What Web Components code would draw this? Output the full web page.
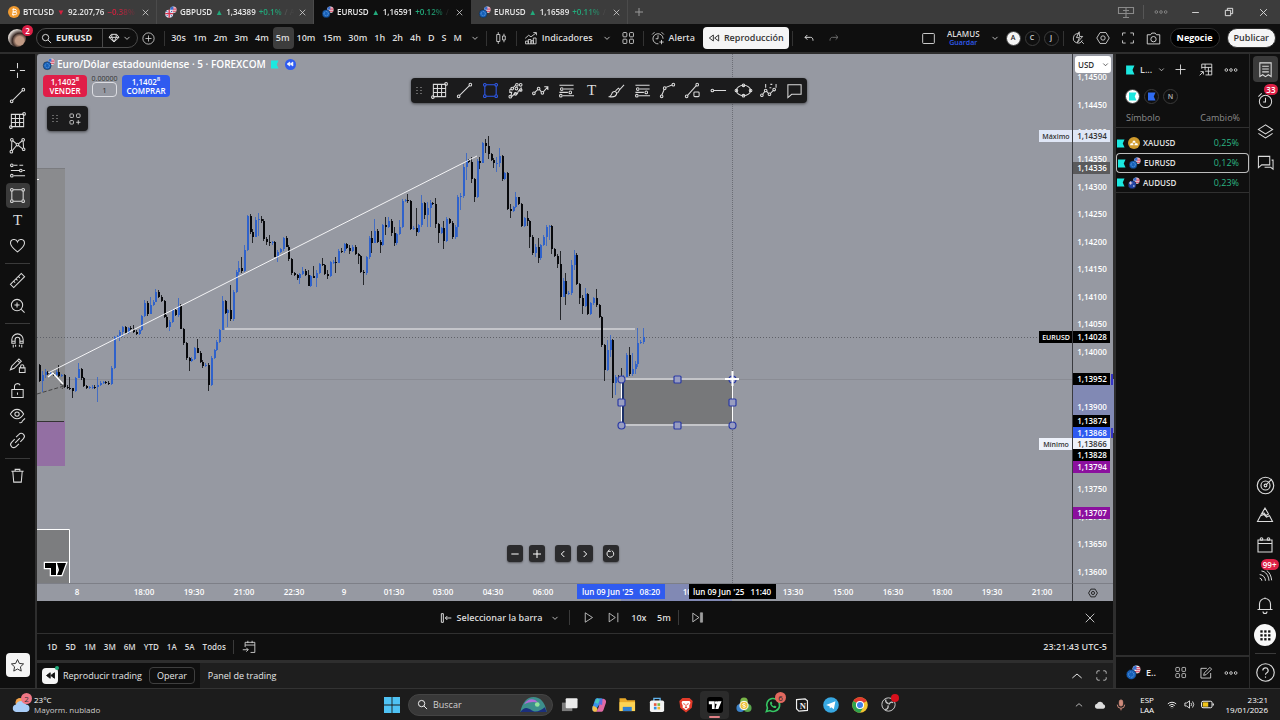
<!DOCTYPE html>
<html lang="es">
<head>
<meta charset="utf-8">
<title>EURUSD 1,16591</title>
<style>
  html, body { height: 100%; }
  body {
    margin: 0;
    overflow: hidden;
    background: #2e2e2e;
    color: #dbdbdb;
    font: 600 9px/12px "Open Sans", "Noto Sans", sans-serif;
  }
</style>
</head>
<body>
<trading-app></trading-app>

<script>
/**
 * Icon shapes, drawn on an 18 x 18 grid
 */
const dot = (x, y, r = 1.4) => `<circle cx="${x}" cy="${y}" r="${r}"/>`;
const US_FLAG = `<circle cx="12.5" cy="5.5" r="4.8" fill="#f3f3f6" stroke="none"/>
  <path d="M12 3.2h5M12 5.6h5.2M9 8h7.6" stroke="#d8304e" stroke-width="1.3"/>
  <path d="M7.8 5.7a4.8 4.8 0 0 1 4.8-5v5z" fill="#3b6fd0" stroke="none"/>`;

const ICONS = {
  cross: '<path d="M9 1v5.5M9 11.500v5.500M1 9h5.500M11.500 9H17"/>',
  trend: dot(2.8, 15.2) + dot(15.2, 2.8) + '<path d="M3.800 14.200 14.200 3.800"/>',
  gann: '<path d="M2.500 2.500h13v13h-13zM2.500 6.800h13M2.500 11.200h13M6.800 2.500v13M11.200 2.500v13"/>' + dot(2, 16) + dot(16, 2),
  pattern: dot(3, 3) + dot(2.500, 15.500) + dot(9, 8) + dot(15, 3) + dot(15.500, 13) + '<path d="M2.700 14 3 4.500M4 4l4 3.200M10 7.200 14 4M15 4.500l.4 7M3.500 14.500 8 9M10 9l4.500 3.500"/>',
  fib: '<path d="M5 3.500h4M11 3.500h4M2 9h9M14.500 9H17M5 14.500h12"/>' + dot(3, 3.5) + dot(12.5, 9) + dot(3, 14.5),
  fibs: '<path d="M1.500 3.500h15M6 7.500h10.500M1.500 11h9M5 14.500h12"/>' + dot(4, 7.5) + dot(13, 11) + dot(3, 14.5),
  box: '<path d="M3 4.500v9M15 4.500v9M4.500 3h9M4.500 15h9"/>' + dot(3, 3) + dot(15, 3) + dot(3, 15) + dot(15, 15),
  text: '<text x="9" y="14" text-anchor="middle" font-family="Liberation Serif, serif" font-size="16" font-weight="400" fill="currentColor" stroke="none">T</text>',
  heart: '<path d="M9 15.800C5 12.500 1.600 9.800 1.600 6.500a3.800 3.800 0 0 1 7.400-1.300 3.800 3.800 0 0 1 7.400 1.300c0 3.300-3.400 6-7.400 9.300z"/>',
  ruler: '<path d="M1.500 13 13 1.500 16.500 5 5 16.500zM5 9.800l1.500 1.500M7.500 7.300 9 8.800M10 4.800l1.500 1.500"/>',
  zoomin: '<circle cx="8.500" cy="8.500" r="6"/><path d="M13 13l3.500 3.500M8.500 5.800v5.400M5.800 8.500h5.400"/>',
  magnet: '<path d="M3 12V8a6 6 0 0 1 12 0v4h-3.500V8a2.500 2.500 0 0 0-5 0v4zM3 9.800h3.500M11.500 9.800H15M4.500 13.500v3M7 13.500v2M11 13.500v2M13.500 13.500v3"/>',
  pencillock: '<path d="M1.500 13.500 3 9.500 10.500 2 13 4.500 5.500 12zM9 3.500 11.500 6M11 11.500h6v5h-6zM12.300 11.500v-1.600a1.700 1.700 0 0 1 3.400 0v1.600"/>',
  lock: '<path d="M3 8h12v8.500H3zM5.800 8V5a3.200 3.200 0 0 1 6-1.600M9 11v2.500"/>',
  eye: '<path d="M1.500 7.500C3.500 4 6 2.500 8.500 2.500s5 1.500 7 5c-2 3.500-4.500 5-7 5s-5-1.500-7-5z"/><circle cx="8.500" cy="7.500" r="2.300"/><path d="M11 16.500c2.500.6 3-.6 3-1.600M14 15l3-3"/>',
  link: '<path d="M7.500 5.500 10.500 2.500a3.200 3.200 0 0 1 4.800 4.500l-3.300 3.500M10.500 12.500 7.500 15.500A3.200 3.200 0 0 1 2.700 11L6 7.500M6.500 11.500l5-5"/>',
  trash: '<path d="M2.500 4.500h13M6.500 4.500V2.500h5v2M4 4.500 5 16h8l1-11.500"/>',
  star: '<path d="M9 1.800l2.200 4.700 5.100.6-3.800 3.500 1 5.100L9 13.200l-4.500 2.500 1-5.100L1.700 7.100l5.100-.6z"/>',
  search: '<circle cx="7.500" cy="7.500" r="5.200"/><path d="M11.500 11.500l5 5"/>',
  gem: '<path d="M5 3.500h8l3.500 4.500L9 15 1.500 8zM1.500 8h15M6 3.500 5.500 8 9 15l3.500-7-.5-4.500"/>',
  plus: '<path d="M9 3v12M3 9h12"/>',
  pluscircle: '<circle cx="9" cy="9" r="7.800"/><path d="M9 4.800v8.400M4.800 9h8.400"/>',
  down: '<path d="M4.500 7 9 11.500 13.500 7"/>',
  up: '<path d="M2 12 9 6l7 6"/>',
  left: '<path d="M11 4.500 6.500 9l4.500 4.500"/>',
  right: '<path d="M7 4.500 11.500 9 7 13.500"/>',
  minus: '<path d="M3.500 9h11"/>',
  reset: '<path d="M5 5.500a5.500 5.500 0 1 0 6-1M5 5.500h4.500M7.500 2.500 5 5.500"/>',
  candles: '<path d="M3.500 4.500h4v9h-4zM5.500 1.500v3M5.500 13.500v3M11 6.500h3.500v5H11zM12.800 3.500v3M12.800 11.500v3"/>',
  indicators: '<path d="M1.500 9.500 6 5.500l3 2 6.500-5M12 2h4v3.500M2 13h3.500v3.500H2zM5.500 11H9v5.500H5.500zM9 12.500h3v4H9zM12 9h3.500v7.500H12z"/>',
  grid4: '<rect x="2.500" y="2" width="5" height="5.500" rx="1"/><rect x="11" y="2" width="5" height="5.500" rx="1"/><rect x="2.500" y="10.500" width="5" height="5.500" rx="1"/><rect x="11" y="10.500" width="5" height="5.500" rx="1"/>',
  addgrid: '<rect x="2.500" y="2.500" width="4.500" height="4.500" rx="1"/><rect x="11" y="2.500" width="4.500" height="4.500" rx="1"/><rect x="2.500" y="11" width="4.500" height="4.500" rx="1"/><path d="M13.200 10.500v5.500M10.500 13.200H16"/>',
  alarm: '<path d="M15.500 10a6.500 6.500 0 1 0-6 6.500M9 5.500v4.500H6M1.500 4.500 4.500 1.500M13.500 1.500l3 3M13.500 11.500v5.500M10.800 14.200h5.500"/>',
  rewind: '<path d="M8 4.500 2 9l6 4.500zM16 4.500 10 9l6 4.500z"/>',
  rewindfill: '<path d="M8.500 4.500 2.500 9l6 4.500zM15.500 4.500 9.500 9l6 4.500z" fill="currentColor"/>',
  undo: '<path d="M6.500 4.500 3 8l3.500 3.500M3 8h8.500c2.500 0 3.500 2 3.500 5"/>',
  redo: '<path d="M11.500 4.500 15 8l-3.500 3.500M15 8H6.500C4 8 3 10 3 13"/>',
  layout: '<rect x="2" y="3" width="14" height="12" rx="1"/>',
  flash: '<path d="M10 3.500a6 6 0 1 0 4.500 8.500M13 13l3.500 3.500M10.500 1 7 8.500h4L8 15l7-8h-4z"/>',
  hexgear: '<path d="M5.200 2h7.600L17 9l-4.200 7H5.200L1 9z"/><circle cx="9" cy="9" r="2.800"/>',
  fullscreen: '<path d="M2 6V2.500h4M12 2.500h4V6M16 12v3.500h-4M6 15.500H2V12"/>',
  maximize: '<path d="M2.500 6.500v-2a2 2 0 0 1 2-2h2M11.500 2.500h2a2 2 0 0 1 2 2v2M15.500 11.500v2a2 2 0 0 1-2 2h-2M6.500 15.500h-2a2 2 0 0 1-2-2v-2"/>',
  camera: '<path d="M1.500 4.500h4l1.500-2h4l1.500 2h4v11h-15z"/><circle cx="9" cy="9.800" r="3.200"/>',
  dots: dot(3, 9, 1.7) + dot(9, 9, 1.7) + dot(15, 9, 1.7),
  panels: '<path d="M1.500 4.500h15v6h-15zM9 4.500v10M6 14.500h6M6 7.500h6"/>',
  restore: '<path d="M3.500 6.500h8v8h-8zM6.500 6.500v-3h8v8h-3"/>',
  close: '<path d="M3.500 3.500l11 11M14.500 3.500l-11 11"/>',
  tablecols: '<path d="M4.500 8V2.500h12v13H9M4.500 6.500h12M8.500 11h8M8.500 2.500v7M12.500 6.500v9M2 16l4-4M3 11.500h3.500V15"/>',
  watchlist: '<path d="M3 2h12v14.500l-3-2-3 2-3-2-3 2zM5.500 5.500h7M5.500 8.500h7M5.500 11.500h7"/>',
  alerts: '<circle cx="9" cy="10" r="6.500"/><path d="M9 6v4.500H6.500M1.500 5 5 1.500"/>',
  layers: '<path d="M9 2 1.500 6.800 9 11.500l7.500-4.700zM1.500 11 9 15.800l7.500-4.800"/>',
  chat: '<path d="M1.500 2.500h12v9H5l-3.500 3zM15.500 6.500h1.500V16l-2.500-2H8"/>',
  target: '<circle cx="9" cy="9" r="7.800"/><circle cx="9" cy="9" r="4.300"/><circle cx="9" cy="9" r="1.300"/><path d="M10 8l5-5"/>',
  pyramid: '<path d="M9 2 5.500 8l2.500-1 2 2.500 2.500-1.500zM4.500 9.800 1.500 15.500h15l-3-5.700-3 1.200-2.500-2.500z"/>',
  calendar: '<path d="M2 4h14v12H2zM2 7.500h14"/><circle cx="5.500" cy="3" r="1.300"/><circle cx="12.500" cy="3" r="1.300"/>',
  stream: '<path d="M3 12.500a3 3 0 0 1 2.500 3M3 8.500a7 7 0 0 1 6.500 7M5 4.500c5 .5 8 5 8.500 11M11 4c3 2 5 6 5.500 11"/>',
  bell: '<path d="M3.500 13.500V8a5.500 5.500 0 0 1 11 0v5.500zM1.500 13.500h15M7 15.500a2 2 0 0 0 4 0M9 2.500V1.500"/>',
  apps: [4, 9, 14].map(y => [4, 9, 14].map(x => `<rect x="${x - 1}" y="${y - 1}" width="3" height="3" fill="currentColor" stroke="none"/>`).join('')).join(''),
  help: '<circle cx="9" cy="9" r="8.300"/><path d="M6.500 7.200a2.500 2.500 0 1 1 3.500 2.200c-.8.400-1 .9-1 1.800M9 12.800v1.200"/>',
  brush: '<path d="M1.500 15.500c3 .5 6.500.5 7.500-2.500.8-2.500-2.200-4-4-2.200-1.500 1.500-.5 3.200-3.500 4.700zM8 9.500 11 6.500l1.500 1.500 4.500-5M10 12l2.500-4"/>',
  highlighter: '<path d="M6.500 6 9 3.500M5 7.500 3 8v3h2l-1 4.500M5 15.500l3-3h3l1-3 3-1v-3"/>' + dot(10.5, 3) + dot(14.5, 3) + dot(14.5, 8.5) + dot(3.5, 15.5) + dot(9, 12.5) + dot(5.5, 7) + dot(10, 7),
  polyline: dot(2, 12) + dot(7, 7) + dot(11, 11.5) + '<path d="M3 11l3-3M8 8l2 2.500M12 10.500l4.500-5M13 5h3.800v3.500"/>',
  curve: dot(2.8, 15.2) + dot(6, 6.5) + dot(15.2, 2.8) + '<path d="M3 13.800 5.500 8M7.300 5.700 13.800 3.200"/>',
  lineshape: dot(2.8, 15.2) + dot(14, 2.8) + '<path d="M3.800 14.200 13 3.800"/><rect x="10.500" y="10.500" width="5.500" height="5" rx="1"/>',
  hray: dot(2.5, 9) + '<path d="M4 9h13"/>',
  ellipse: '<ellipse cx="9" cy="9" rx="7.500" ry="5.500"/>' + dot(1.5, 9) + dot(16.5, 9) + dot(9, 3.5) + dot(9, 14.5),
  elliott: dot(2, 14) + dot(6, 9) + dot(10, 13) + dot(15, 8) + '<path d="M2.800 13l2.400-3M7 10l2 2M11 12l3-3M6 2v4M11 2.500h2M17 2v4M10 6h2"/>',
  comment: '<path d="M2 3h14v10H6l-4 3.500z"/>',
  selectbar: '<path d="M2 2.500h3v13H2zM8 9h9M11 6 8 9l3 3"/>',
  play: '<path d="M4.500 2.500 14.500 9l-10 6.500z"/>',
  step: '<path d="M3 3l8.500 6L3 15zM15 2.500v13"/>',
  jump: '<path d="M2.500 3l8.500 6-8.500 6z"/><path d="M13 2.500h3v13h-3z" fill="currentColor" opacity="0.700"/>',
  gotodate: '<path d="M4 9V3h12.500v13H11M4 6.500h12.500M7.500 1v3M13 1v3M1 12.500h7M5.500 10 8 12.500 5.500 15"/>',
  edit: '<path d="M10 3H2.500v12.500H15V9M6 12l.8-3L14 1.800 16.200 4 9 11.200z"/>',
  flag: '<path d="M2 1h15l-3.500 8 3.500 8H2z" fill="currentColor" stroke="none"/>',
  btc: '<circle cx="9" cy="9" r="9" fill="#f09a30" stroke="none"/><path d="M6.500 5h4a2 2 0 0 1 0 4h-3 3.500a2 2 0 0 1 0 4h-5M8 5l-1 8M8.500 3.500V5M8 13v1.500" stroke="#fff" stroke-width="1.400"/>',
  eurusd: US_FLAG + '<circle cx="6.300" cy="11.500" r="6" fill="#1760b8" stroke="#111" stroke-width=".6"/><circle cx="6.300" cy="11.500" r="3.200" stroke="#7bb4ec" stroke-dasharray="1 1.200"/>',
  gbpusd: US_FLAG + '<circle cx="6.300" cy="11.500" r="6" fill="#e9e9f2" stroke="none"/><path d="M6.300 5.500v12M.3 11.500h12" stroke="#d8304e" stroke-width="2"/><path d="M2 7.500l2 2M10.600 7.500l-2 2M2 15.500l2-2M10.600 15.500l-2-2" stroke="#3458b0" stroke-width="1.500"/>',
  audusd: US_FLAG + '<circle cx="6.300" cy="11.500" r="6" fill="#2445a4" stroke="#111" stroke-width=".6"/><path d="M1.500 9h5M4 6.500v5" stroke="#f1d7e0" stroke-width="1.400"/><circle cx="8.800" cy="13.500" r="1" fill="#fff" stroke="none"/>',
  gold: '<circle cx="9" cy="9" r="9" fill="#cf9a2c" stroke="none"/><path d="M6.500 8.500 7.500 5.500h3l1 3zM3 12.500l1-3h3.500l1 3zM9.500 12.500l1-3H14l1 3z" fill="#fff" stroke="none"/>',
  tv: '<path d="M.5 4h8v10.500H4.800V8H.5zM12.300 4H18l-4.400 10.500H9.500z" fill="currentColor" stroke="none"/><circle cx="10.600" cy="5.800" r="1.800" fill="currentColor" stroke="none"/>',
  windows: '<path d="M0 0h8.500v8.500H0zM9.500 0H18v8.500H9.500zM0 9.500h8.500V18H0zM9.500 9.500H18V18H9.500z" fill="#4fc3f5" stroke="none"/>',
  taskview: '<rect x="1" y="7" width="11" height="9" fill="#7b7b7b" stroke="none"/><rect x="5" y="2.500" width="12.500" height="10.500" rx="1" fill="#ececec" stroke="none"/>',
  copilot: '<path d="M7 1.500h4.500c1.500 0 2 1 2.500 2.500l1 3-6 2-5 7C1.500 16 1 14 1.500 12l3-8.500C5 2 5.500 1.500 7 1.500z" fill="#3b91e8" stroke="none"/><path d="M14 2c2 .2 3.500 2 2.800 4.500L14 14.500c-.5 1.500-1.500 2-3 2H4c2.500 0 3.500-2 4.500-5l2-6C11.200 3.300 12 2 14 2z" fill="#e06aa5" stroke="none"/><path d="M2 10c2 0 4 1 5.500 3.500L6 16.500H4C2 16.500 1 14 2 10z" fill="#f4c04a" stroke="none"/><path d="M7 1.500 4 6l4 2 2-5z" fill="#45c7c0" stroke="none"/><path d="M13 2l-3 1.500L8.500 8l4 1z" fill="#5a6fe0" stroke="none"/>',
  folder: '<path d="M.5 2.500H7L8.500 4.500H17v11.500H.5z" fill="#e9a928" stroke="none"/><path d="M.5 6.500H17V16H.5z" fill="#fcd354" stroke="none"/><path d="M4 16v-4.500h9.500V16z" fill="#2f7fd0" stroke="none"/>',
  store: '<path d="M5.500 4.500v-3h7v3" stroke="#62b5ee" stroke-width="1.500"/><rect x="1" y="4" width="16" height="13" rx="2" fill="#f3f3f3" stroke="none"/><path d="M5.500 7h3v3h-3z" fill="#e4573d" stroke="none"/><path d="M9.500 7h3v3h-3z" fill="#77b843" stroke="none"/><path d="M5.500 11h3v3h-3z" fill="#2f8fe0" stroke="none"/><path d="M9.500 11h3v3h-3z" fill="#f3b52e" stroke="none"/>',
  brave: '<path d="M5 1h8l3.500 3.500-1 7.500L9 17.500 2.500 12l-1-7.500z" fill="#e23b2a" stroke="none"/><path d="M5 4.500h8l1 2-1.500 3.500.5 1.500-4 3-4-3 .5-1.500L4 6.500z" fill="#fff" stroke="none"/><path d="M6 7.500l2.300 1M12 7.500l-2.300 1M9 9v2.500M7.500 12.500 9 11.500l1.500 1" stroke="#e23b2a"/>',
  moneyapp: '<circle cx="9" cy="5" r="4.300" fill="#7ab648" stroke="none"/><circle cx="5" cy="12.500" r="4.500" fill="#3d83c9" stroke="none"/><circle cx="13" cy="12.500" r="4.500" fill="#58a54d" stroke="none"/><circle cx="9" cy="9.500" r="4.600" fill="#f0c33c" stroke="#fff"/><path d="M10.500 8c-1-1-3-.6-3 .5s3 .9 3 2-2 1.500-3 .5" stroke="#fff"/>',
  whatsapp: '<path d="M1.500 16.500 2.800 12.500A7.300 7.300 0 1 1 5.600 15.300z" fill="#171717" stroke="#36c764" stroke-width="1.800"/><path d="M6 5.500c-1 2 1 6.500 6 7l1-1.500-2-1.300-1 .8C8.500 10 7.700 9 7.500 8l.8-.8L7.300 5z" fill="#36c764" stroke="none"/>',
  notion: '<path d="M2 2l11-.8 3 2.300v12.500l-11 .8-3-3z" fill="#171717" stroke="#eee" stroke-width="1.500"/><text x="10" y="14" text-anchor="middle" font-family="Liberation Serif, serif" font-weight="700" font-size="11" fill="#eee" stroke="none">N</text>',
  telegram: '<circle cx="9" cy="9" r="8.800" fill="#38a8e2" stroke="none"/><path d="M3.500 9 14 4.700l-1.800 9-3-2.200-1.500 1.500-.3-2.700z" fill="#fff" stroke="none"/>',
  chrome: '<circle cx="9" cy="9" r="8.800" fill="#f4c430" stroke="none"/><path d="M9 9 1.500 4.600A8.800 8.800 0 0 1 16.600 4.600z" fill="#e2392f" stroke="none"/><path d="M9 9 1.500 4.600A8.800 8.800 0 0 0 9 17.800l3-5z" fill="#2ea24d" stroke="none"/><circle cx="9" cy="9" r="4" fill="#3f7fe8" stroke="#fff" stroke-width="1.200"/>',
  obs: '<circle cx="9" cy="9" r="8" fill="#222" stroke="#c9c9c9" stroke-width="1.200"/><path d="M9 8c-3-1-4-3-3-5M9.500 9c1-3 3.500-3.500 5-2M8.500 10c.5 3-1 5-3.500 5" stroke="#c9c9c9" stroke-width="1.600"/>',
  weather: '<circle cx="8" cy="6.500" r="4.500" fill="#f4a44c" stroke="none"/><path d="M4 16a3.800 3.800 0 0 1 0-7.500A5.300 5.300 0 0 1 14 8.500 3.800 3.800 0 0 1 14.500 16z" fill="#a9cdf7" stroke="none"/>',
  cloud: '<path d="M4.500 14.500a3.800 3.800 0 0 1 0-7.500 5 5 0 0 1 9.500 1 3.300 3.300 0 0 1 0 6.500z" fill="#dcdcdc" stroke="none"/>',
  mic: '<rect x="6.500" y="1.500" width="5" height="9" rx="2.500" fill="#d08c7c" stroke="#d08c7c"/><path d="M3.500 8.500a5.500 5.500 0 0 0 11 0M9 14v3" stroke="#d08c7c"/>',
  wifi: '<path d="M1.500 7a11 11 0 0 1 15 0M4 10a7.200 7.200 0 0 1 10 0M6.500 12.500a3.800 3.800 0 0 1 5 0M9 14.500v.5" stroke-width="1.600"/>',
  speaker: '<path d="M1.500 6.500h3L9 3v12l-4.500-3.500h-3zM11.500 6.500a4 4 0 0 1 0 5M14 4a8 8 0 0 1 0 10" stroke-width="1.300"/>',
  battery: '<rect x=".8" y="4.500" width="14.500" height="9" rx="2" stroke-width="1.300"/><path d="M2.500 6h7.500v6H2.500z" fill="#f0c419" stroke="none"/><path d="M17 7.500v3" stroke-width="1.500"/>',
  globe: '<path d="M-5 17C-3 7 2 1 9 1s12 5 14 16z" fill="#3d8f8c" stroke="none"/><path d="M-5 17c4-6 8-5 12-2s9 1 14-3l2 5z" fill="#1b2f7d" stroke="none"/><path d="M-1 9c3-6 10-8 15-2-5-1-10-1-15 2z" fill="#b16ad6" stroke="none"/><circle cx="13" cy="9" r="2.500" fill="#8fe39b" stroke="none"/>'
};

class BaseElement extends HTMLElement {
  constructor() {
    super();
    this.attachShadow({ mode: 'open' });
  }

  connectedCallback() {
    this.shadowRoot.innerHTML = `
      <style>
        :host, * { box-sizing: border-box; }
        button, input, select {
          font: inherit;
          color: inherit;
          background: none;
          border: 0;
          padding: 0;
          margin: 0;
        }
        button {
          display: inline-flex;
          align-items: center;
          justify-content: center;
          flex: none;
          cursor: pointer;
          white-space: nowrap;
        }
        ${this.styles()}
      </style>
      ${this.markup()}
    `;
  }

  styles() { return ''; }
  markup() { return '<slot></slot>'; }
}

class TvIcon extends BaseElement {
  styles() {
    const size = this.getAttribute('size') || 18;
    // small icons get a heavier line so they stay readable
    const stroke = size < 13 ? 1.5 : 1.1;
    return `
      :host { display: inline-flex; flex: none; width: ${size}px; height: ${size}px; }
      svg { width: 100%; height: 100%; overflow: visible; fill: none; stroke: currentColor; stroke-width: ${stroke}; }
    `;
  }
  markup() {
    return `<svg viewBox="0 0 18 18" aria-hidden="true">${ICONS[this.getAttribute('name')]}</svg>`;
  }
}

const icon = (name, size = 18) => `<tv-icon name="${name}" size="${size}"></tv-icon>`;
const iconButton = (name, label, size = 18, cls = '') =>
  `<button class="${cls}" aria-label="${label}">${icon(name, size)}</button>`;

/**
 * Red counter bubble placed over an icon
 */
class CountBadge extends BaseElement {
  styles() {
    return `
      :host {
        display: block;
        position: absolute;
        top: -3px;
        right: 0;
        min-width: 11px;
        padding: 0 2px;
        border-radius: 6px;
        background: #dc2046;
        color: #fff;
        font-size: 8px;
        line-height: 11px;
        text-align: center;
      }
    `;
  }
}

class TabStrip extends BaseElement {
  styles() {
    return `
      :host { display: flex; align-items: stretch; height: 24px; background: #3c3c3c; flex: none; }
      .tab { display: flex; align-items: center; gap: 3px; flex: 0 1 157px; min-width: 0; padding: 0 6px 0 8px; border-right: 1px solid #4b4b4b; }
      .tab.active { background: #0f0f0f; border-color: #0f0f0f; }
      .tab .name { flex: 1; min-width: 0; overflow: hidden; justify-content: flex-start; gap: 3px; color: #e8e8e8; font-size: 8px;
        -webkit-mask-image: linear-gradient(90deg, #000 80%, transparent); mask-image: linear-gradient(90deg, #000 80%, transparent); }
      .up { color: #22ab7c; }
      .down { color: #d5213f; }
      .faint { color: #777; }
      .spacer { flex: 1; }
      .win { width: 34px; color: #ddd; }
      .add { width: 22px; color: #999; }
      .muted { color: #8a8a8a; }
      .line { width: 1px; margin: 5px 0; background: #565656; }
    `;
  }
  markup() {
    const tabs = [
      ['btc', 'BTCUSD', '▼', '92.207,76', '−0.38%', 'down'],
      ['gbpusd', 'GBPUSD', '▲', '1,34389', '+0.1%', 'up', '/ A'],
      ['eurusd', 'EURUSD', '▲', '1,16591', '+0.12%', 'up', '/'],
      ['eurusd', 'EURUSD', '▲', '1,16589', '+0.11%', 'up', '/']
    ];
    return tabs.map(([ic, symbol, arrow, price, change, dir, rest], i) => `
      <div class="tab ${i === 2 ? 'active' : ''}">
        ${icon(ic, 12)}
        <button class="name"><span>${symbol}</span><span class="${dir}">${arrow}</span><span>${price}</span><span class="${dir}">${change}</span>${rest ? `<span class="faint">${rest}</span>` : ''}</button>
        ${iconButton('close', 'Cerrar pestaña', 9)}
      </div>
    `).join('') + `
      ${iconButton('plus', 'Nueva pestaña', 12, 'add')}
      <span class="spacer"></span>
      ${iconButton('panels', 'Paneles', 18, 'win muted')}
      <span class="line"></span>
      ${iconButton('dots', 'Más', 14, 'win muted')}
      ${iconButton('minus', 'Minimizar', 11, 'win')}
      ${iconButton('restore', 'Restaurar', 12, 'win')}
      ${iconButton('close', 'Cerrar', 11, 'win')}
    `;
  }
}

class TopToolbar extends BaseElement {
  styles() {
    return `
      :host { display: flex; align-items: center; height: 28px; background: #0f0f0f; flex: none; padding: 0 4px 0 8px; }
      .avatar { position: relative; width: 18px; height: 18px; border-radius: 50%; background: radial-gradient(circle at 65% 65%, #c09a84 25%, #3a2a26 45%, #d9d2cc 70%); margin-right: 10px; }
      .avatar count-badge { top: -4px; right: -7px; }
      .pill { display: flex; height: 20px; border: 1px solid #4a4a4a; border-radius: 10px; margin-right: 1px; }
      .pill .symbol { padding: 0 10px 0 4px; gap: 4px; border-right: 1px solid #4a4a4a; color: #e8e8e8; font-weight: 700; }
      .pill .kind { padding: 0 5px; gap: 2px; }
      .sep { width: 1px; height: 15px; background: #333; flex: none; margin: 0 2px; }
      .sep.first { margin: 0 3px 0 7px; }
      .sq { width: 25px; height: 24px; }
      .nar { width: 18px; height: 24px; }
      .interval { height: 22px; padding: 0 4px 0 3px; border-radius: 4px; }
      .interval.on { background: #3d3d3d; }
      .wide { gap: 4px; padding: 0 5px; height: 24px; }
      .replay { height: 22px; padding: 0 5px; gap: 4px; background: #f5f5f5; color: #333; border-radius: 4px; margin: 0 1px 0 3px; }
      .spacer { flex: 1; }
      .layout { flex-direction: column; padding: 0 6px; font-size: 8px; line-height: 10px; }
      .layout small { font-size: 7px; line-height: 8px; color: #2f5bf0; }
      .round { width: 15px; height: 15px; border-radius: 50%; border: 1px solid #3c3c3c; font-size: 7px; margin: 0 2px; }
      .round.on { background: #f5f5f5; color: #222; }
      .cta { height: 20px; border-radius: 10px; padding: 0 6px; border: 1px solid #2e2e2e; background: #000; color: #fff; font-weight: 700; margin-left: 4px; }
      .cta.light { background: #f5f5f5; color: #333; font-weight: 600; margin-left: 7px; }
      .dim { color: #6a6a6a; }
      .undo { margin-left: 2px; }
    `;
  }
  markup() {
    const intervals = ['30s', '1m', '2m', '3m', '4m', '5m', '10m', '15m', '30m', '1h', '2h', '4h', 'D', 'S', 'M'];
    return `
      <button class="avatar" aria-label="Perfil"><count-badge>2</count-badge></button>
      <div class="pill">
        <button class="symbol">${icon('search', 11)}EURUSD</button>
        <button class="kind" aria-label="Tipo">${icon('gem', 12)}${icon('down', 10)}</button>
      </div>
      ${iconButton('pluscircle', 'Comparar', 13, 'nar')}
      <span class="sep first"></span>
      ${intervals.map(t => `<button class="interval ${t === '5m' ? 'on' : ''}">${t}</button>`).join('')}
      ${iconButton('down', 'Más intervalos', 10, 'nar')}
      <span class="sep"></span>
      ${iconButton('candles', 'Velas', 14, 'sq')}
      <span class="sep"></span>
      <button class="wide">${icon('indicators', 14)}Indicadores</button>
      ${iconButton('down', 'Favoritos', 10, 'nar')}
      ${iconButton('grid4', 'Plantillas', 14, 'sq')}
      <span class="sep"></span>
      <button class="wide">${icon('alarm', 14)}Alerta</button>
      <button class="replay">${icon('rewind', 12)}Reproducción</button>
      <span class="sep"></span>
      ${iconButton('undo', 'Deshacer', 12, 'sq undo')}
      ${iconButton('redo', 'Rehacer', 12, 'sq dim')}
      <span class="spacer"></span>
      ${iconButton('layout', 'Diseño', 15, 'sq')}
      <button class="layout">ALAMUS<small>Guardar</small></button>
      ${iconButton('down', 'Diseños', 10, 'nar')}
      <button class="round on">A</button><button class="round">C</button><button class="round">J</button>
      <span class="sep"></span>
      ${iconButton('flash', 'Búsqueda rápida', 14, 'sq')}
      ${iconButton('hexgear', 'Configuración', 14, 'sq')}
      ${iconButton('fullscreen', 'Pantalla completa', 14, 'sq')}
      ${iconButton('camera', 'Captura', 15, 'sq')}
      <button class="cta">Negocie</button>
      <button class="cta light">Publicar</button>
    `;
  }
}

class DrawingRail extends BaseElement {
  styles() {
    return `
      :host { display: flex; flex-direction: column; align-items: center; width: 35px; background: #0f0f0f; padding: 4px 0 11px; flex: none; }
      button { width: 24px; height: 25px; border-radius: 4px; }
      .on { background: #3a3a3a; }
      hr { width: 25px; height: 1px; border: 0; margin: 5px 0 4px; background: #3a3a3a; }
      .spacer { flex: 1; }
      .fav { height: 24px; background: #f5f5f5; color: #222; }
    `;
  }
  markup() {
    const groups = [
      ['cross', 'trend', 'gann', 'pattern', 'fib', 'box', 'text', 'heart'],
      ['ruler', 'zoomin'],
      ['magnet', 'pencillock', 'lock', 'eye', 'link'],
      ['trash']
    ];
    return groups.map(g => g.map(n => iconButton(n, n, 17, n === 'box' ? 'on' : '')).join('')).join('<hr>') + `
      <span class="spacer"></span>
      ${iconButton('star', 'Favoritos', 15, 'fav')}
    `;
  }
}

/**
 * Candle data. Each entry is close[/high/low] in thirds of a pixel from the
 * segment base; a bar opens where the one before it closed.
 */
const SEGMENTS = [
  { base: 130, open: 705, bars: '752 735/722/785 726/718/745 732 730 735 727/720/740 738/705/740 735 770 773 775/740/780 783/775/803 745 718/700/745 745 768 773 772 770 772 765/742/815 758 757 758 762 713 622 618 605/600/632 592/588/622 608 595 597/588/600 605/586/608 612 600 558 518/510/560 553 525/500/550 515 485/478/515 500 513 560 590 575/570/602 540 555 528/505/560 598/522/598 640 685 692/680/722 686 655 668/628/670 695 708/690/714 704 765/700/782 683 660 635 600 513/498/600 548 540/538/592 568/465/572 485 425 415/392/434 422/380/428 360/345/425 258 305/252/312 320/298/340 270/262/320 268/248/318 272/258/280 328 335/322/345 340/315/348 337 380/333/382 365/360/395 358 325 350/318/352 388 430 435 445 432/428/462 422/412/435 435 467/420/467 438 443/408/445 428/420/472 402 405/385/408 432 438/420/446' },
  { base: 120, open: 467, bars: '427 425 428/410/460 392/386/430 394/385/400 372 383 393/375/402 380 402 408/400/432 455 460/450/495 412 353 368/332/400 332/297/370 365 375/360/400 315 320/290/345 303/292/325 340/298/348 370/322/378 342 322/300/345 243/238/325 241 243/222/250 327 323 335/265/348 315 250/225/320 285/245/298 265/245/320 250/240/322 252 312/235/325 338/308/370 325 362/304/388 298/292/365 308 352 320/315/356 232/225/350 228/220/270 140/132/235 120/100/180 125 178/110/190 232/175/245 123/118/235 128/112/147 70/66/130 78/58/100 102/48/118 120 130/115/143 128/110/155 108/85/140 178 160/155/180 267 272/252/295 262 232/215/265 252/235/256 318/248/322 295 302/272/318 350/300/385 400 380/372/412 415/355/430 375 350 320/315/378 318/314/360 388/314/402 408 432/402/444 530/392/600 483/475/530 522/460/555 518 435/420/525 405/390/450 492/400/494 535/490/552 557/525/582 522/505/560 582/520/584 550 535 555/508/562 590 675/588/680 750/672/782 690/660/752 660/645/710 790/658/835 770/765/825 775 790/745/860 770 705/700/772 762/682/768 748/700/768 732/722/762 668/625/740 665 650/625/672' }
];
const BAR_STEP = 2.77;
const FIRST_BAR_X = 39;

// the pane starts 37px from the left and 54px from the top of the window
const ORIGIN_X = 37;
const ORIGIN_Y = 54;

const priceY = price => Math.round(104.5 + (1.1445 - price) * 54960) - ORIGIN_Y;
const formatPrice = price => price.toFixed(5).replace('.', ',');

class PricePlot extends BaseElement {
  styles() {
    return `
      :host { display: block; position: relative; overflow: hidden; background: #9699a2; min-width: 0; border-top-left-radius: 3px; }
      svg.plot { position: absolute; width: 100%; height: 100%; }
      .legend { position: absolute; top: 4px; left: 6px; display: flex; align-items: center; gap: 2px; color: #fff; font-size: 10px; }
      .legend .flag { color: #1ce8e0; margin-left: 2px; }
      .legend .rw { width: 11px; height: 11px; border-radius: 50%; background: #2f5bf0; margin-left: 4px; }
      .trade { position: absolute; top: 21px; left: 6px; display: flex; align-items: flex-start; gap: 5px; }
      .trade button { flex-direction: column; width: 44px; height: 22px; border-radius: 4px; color: #fff; background: #e01e48; font-size: 8px; line-height: 9px; }
      .trade button.buy { width: 48px; background: #2f5bf0; }
      .trade sup { font-size: 6px; line-height: 0; }
      .qty { display: flex; flex-direction: column; align-items: center; width: 25px; font-size: 7px; line-height: 7px; font-weight: 400; color: #333; }
      .qty input { width: 25px; height: 15px; border: 1px solid #dcdde2; border-radius: 4px; text-align: center; font-size: 8px; }
      .mini, .tools { position: absolute; display: flex; align-items: center; background: #1b1b1c; border-radius: 4px; box-shadow: 0 1px 3px #0008; height: 25px; }
      .mini { top: 52px; left: 10px; padding: 0 6px 0 4px; gap: 9px; }
      .tools { top: 24px; left: 374px; width: 396px; padding: 0 0 0 4px; gap: 4px; }
      .set { display: flex; flex: 1; justify-content: space-around; }
      .tools button { width: 24px; height: 25px; }
      .tools .on { color: #2f5bf0; }
      .grip { width: 8px; height: 9px; background: radial-gradient(circle, #666 1px, transparent 1px) 0 0 / 4px 3px; }
      .nav { position: absolute; bottom: 21px; left: 0; right: 0; display: flex; justify-content: center; gap: 6px; padding-left: 16px; pointer-events: none; }
      .nav button { width: 16px; height: 17px; border-radius: 3px; background: #2b2b2d; box-shadow: 0 1px 2px #0006; pointer-events: auto; color: #fff; }
      .nav .gap { margin-left: 4px; }
    `;
  }

  candles() {
    let i = 0;
    let out = '';
    SEGMENTS.forEach(({ base, open, bars }) => {
      bars.split(' ').forEach(bar => {
        const [close, high, low] = bar.split('/').map(Number);
        const top = Math.min(open, close);
        const bottom = Math.max(open, close);
        const x = Math.round(FIRST_BAR_X + i * BAR_STEP);
        const color = close <= open ? '#2f62cb' : '#08090c';
        const y = v => Math.round(base + v / 3);
        const hi = y(high || top - 4);
        const lo = y(low || bottom + 4);
        out += `<rect x="${x}" y="${hi}" width="1" height="${lo - hi}" fill="${color}" opacity="0.8"/>`;
        out += `<rect x="${x}" y="${y(top)}" width="2" height="${Math.max(1, y(bottom) - y(top))}" fill="${color}"/>`;
        open = close;
        i++;
      });
    });
    return out;
  }

  handles() {
    const round = [[621, 379], [621, 425], [732, 379], [732, 425]];
    const square = [[677, 379], [621, 402], [732, 402], [677, 425]];
    return `
      <g fill="#989dc0" stroke="#2a3aa5" stroke-width="1.200">
        ${round.map(([x, y]) => `<circle cx="${x}.500" cy="${y}.500" r="3.500"/>`).join('')}
        ${square.map(([x, y]) => `<rect x="${x - 3}" y="${y - 3}" width="7" height="7" rx="1"/>`).join('')}
      </g>
      <path d="M725 379h14M732.500 371v15" stroke="#fff" stroke-width="2"/>
    `;
  }

  markup() {
    const tools = ['gann', 'trend', 'box', 'highlighter', 'polyline', 'fibs', 'text', 'brush', 'fibs', 'curve', 'lineshape', 'hray', 'ellipse', 'elliott', 'comment'];
    return `
      <svg class="plot">
        <g transform="translate(${-ORIGIN_X} ${-ORIGIN_Y})">
          <rect x="37" y="168" width="28" height="253" fill="#8a8b8e"/>
          <path d="M37 168.500h28" stroke="#7b7c80"/>
          <rect x="37" y="421" width="28" height="45" fill="#936fa3"/>
          <path d="M37 421.500h27" stroke="#333"/>
          <rect x="37" y="529" width="33" height="60" fill="#7c7d7f"/>
          <path d="M37 529.500h32.500V600" fill="none" stroke="#fff"/>
          <path d="M37 179.500h2" stroke="#fff"/>
          <path d="M37 337.500h2000" stroke="#5f6168" stroke-dasharray="1 2"/>
          <path d="M37 379.500h2000" stroke="#8a8c94"/>
          <path d="M732.500 54v600" stroke="#6b6d75" stroke-dasharray="1 1"/>
          <path d="M225 329h410" stroke="#c4c5ca" stroke-width="2"/>
          <path d="M37 394l27-8M60 384l4 2-2 3" fill="none" stroke="#444" stroke-dasharray="4 2"/>
          <g shape-rendering="crispEdges">${this.candles()}</g>
          <path d="M48 373 477 156" stroke="#f4f4f6"/>
          <path d="M48 377l5-4 10 11" fill="none" stroke="#fff" stroke-width="1.500"/>
          <rect x="624" y="379" width="108" height="46" fill="#77787a"/>
          <path d="M621 379h111M621 425h111" stroke="#c4c5c9" stroke-width="2"/>
          <path d="M621.500 379v46M732.500 379v46" stroke="#fff" stroke-width="1"/>
          <path d="M623 380v44" stroke="#1b2f66" stroke-width="2"/>
          ${this.handles()}
          <path d="M45 563h11v12h-5v-7h-6zM57 563h9l-4.500 12H57l2-5z" fill="#000" stroke="#fff" stroke-width="2.500" paint-order="stroke"/>
        </g>
      </svg>
      <div class="legend">
        ${icon('eurusd', 12)}
        <span>Euro/Dólar estadounidense · 5 · FOREXCOM</span>
        <tv-icon class="flag" name="flag" size="9"></tv-icon>
        <button class="rw" aria-label="Modo reproducción">${icon('rewindfill', 8)}</button>
      </div>
      <div class="trade">
        <button class="sell"><span>1,1402<sup>8</sup></span><span>VENDER</span></button>
        <label class="qty">0.00000<input value="1"></label>
        <button class="buy"><span>1,1402<sup>8</sup></span><span>COMPRAR</span></button>
      </div>
      <div class="mini"><span class="grip"></span>${iconButton('addgrid', 'Añadir', 14)}</div>
      <div class="tools">
        <span class="grip"></span>
        <div class="set">${tools.map(n => iconButton(n, n, 17, n === 'box' ? 'on' : '')).join('')}</div>
      </div>
      <div class="nav">
        ${iconButton('minus', 'Alejar', 12)}${iconButton('plus', 'Acercar', 12)}
        ${iconButton('left', 'Atrás', 12, 'gap')}${iconButton('right', 'Adelante', 12)}
        ${iconButton('reset', 'Restablecer', 11, 'gap')}
      </div>
    `;
  }
}

class PriceScale extends BaseElement {
  styles() {
    return `
      :host { display: block; position: relative; background: #9699a2; border-left: 1px solid #3a3b40; }
      svg { position: absolute; width: 100%; height: 100%; overflow: visible; font-size: 8px; }
      .name { font-size: 7px; }
      .currency { position: absolute; top: 2px; left: 2px; display: flex; align-items: center; width: 36px; height: 17px; border-radius: 3px; background: #fff; color: #333; }
      select { appearance: none; width: 100%; height: 100%; padding: 0 3px; font-size: 8px; }
      .currency tv-icon { position: absolute; right: 1px; pointer-events: none; }
    `;
  }
  markup() {
    // round prices that a tag would cover completely are left out
    const hidden = ['1,13950', '1,13850', '1,13800'];
    const ticks = [];
    for (let p = 1.145; p > 1.1359; p -= 0.0005) {
      if (!hidden.includes(formatPrice(p))) ticks.push(p);
    }
    const tags = [
      [136, '1,14394', '#dfe6f6', '#333', 'Máximo'],
      [168, '1,14336', '#5a5a5c', '#fff'],
      [337, '1,14028', '#000', '#fff', 'EURUSD'],
      [379, '1,13952', '#000', '#fff'],
      [421, '1,13874', '#000', '#fff'],
      [433, '1,13868', '#2f5bf0', '#fff'],
      [444, '1,13866', '#eef2fb', '#333', 'Mínimo'],
      [455, '1,13828', '#000', '#fff'],
      [467, '1,13794', '#8b109e', '#fff'],
      [513, '1,13707', '#8b109e', '#fff']
    ];
    return `
      <svg text-anchor="middle">
        <rect y="325" width="41" height="54" fill="#8189b4"/>
        <rect x="38" y="320" width="2" height="11" fill="#3434c8"/>
        <rect x="38" y="374" width="2" height="10" fill="#3434c8"/>
        ${ticks.map(p => `<text x="19" y="${priceY(p) + 3}" fill="#fff">${formatPrice(p)}</text>`).join('')}
        ${tags.map(([y, label, bg, fg, name]) => `
          <rect y="${y - ORIGIN_Y - 6}" width="37" height="12" fill="${bg}"/>
          <text x="19" y="${y - ORIGIN_Y + 3}" fill="${fg}">${label}</text>
          ${name ? `<rect x="-34" y="${y - ORIGIN_Y - 6}" width="33" height="12" fill="${bg}"/><text class="name" x="-17" y="${y - ORIGIN_Y + 3}" fill="${fg}">${name}</text>` : ''}
        `).join('')}
      </svg>
      <div class="currency"><select aria-label="Moneda"><option>USD</option></select>${icon('down', 9)}</div>
    `;
  }
}

class TimeScale extends BaseElement {
  styles() {
    return `
      :host { display: block; background: #9699a2; border-top: 1px solid #7d7f87; min-width: 0; overflow: hidden; }
      svg { display: block; width: 100%; height: 100%; font-size: 8px; }
    `;
  }
  markup() {
    const labels = ['18:00', '19:30', '21:00', '22:30', '9', '01:30', '03:00', '04:30', '06:00', '', '', '10:30', '', '13:30', '15:00', '16:30', '18:00', '19:30', '21:00'];
    return `
      <svg text-anchor="middle" fill="#fff">
        <rect x="584" width="111" height="18" fill="#8189b4"/>
        <text x="40" y="11">8</text>
        ${labels.map((t, i) => t ? `<text x="${Math.round(107 + i * 49.9)}" y="11">${t}</text>` : '').join('')}
        <rect x="540" width="88" height="15" fill="#2f5bf0"/>
        <text x="584" y="11" xml:space="preserve">lun 09 Jun '25   08:20</text>
        <rect x="652" width="87" height="15" fill="#000"/>
        <text x="695" y="11" xml:space="preserve">lun 09 Jun '25   11:40</text>
      </svg>
    `;
  }
}

class ChartPane extends BaseElement {
  styles() {
    return `
      :host { display: grid; grid-template: minmax(0, 1fr) 18px / minmax(0, 1fr) 41px; flex: 1; min-height: 0; }
      .corner { background: #9699a2; border-left: 1px solid #3a3b40; border-top: 1px solid #7d7f87; color: #111; }
    `;
  }
  markup() {
    return `
      <price-plot></price-plot><price-scale></price-scale>
      <time-scale></time-scale>${iconButton('hexgear', 'Configuración de escala', 10, 'corner')}
    `;
  }
}

class ReplayBar extends BaseElement {
  styles() {
    return `
      :host { display: grid; grid-template-columns: 1fr auto 1fr; align-items: center; height: 33px; padding-top: 1px; background: #0f0f0f; border-bottom: 1px solid #303030; flex: none; }
      .mid { grid-column: 2; display: flex; align-items: center; }
      button { height: 24px; }
      .select { gap: 5px; }
      .sq { width: 25px; }
      .sep { width: 1px; height: 15px; background: #3a3a3a; margin: 0 6px 0 2px; }
      .close { justify-self: end; margin-right: 16px; }
    `;
  }
  markup() {
    return `
      <div class="mid">
        <button class="select">${icon('selectbar', 12)}Seleccionar la barra</button>
        ${iconButton('down', 'Opciones', 10, 'sq')}
        <span class="sep"></span>
        ${iconButton('play', 'Reproducir', 13, 'sq')}
        ${iconButton('step', 'Avanzar', 13, 'sq')}
        <button class="sq">10x</button>
        <button class="sq">5m</button>
        <span class="sep"></span>
        ${iconButton('jump', 'Ir a tiempo real', 13, 'sq')}
      </div>
      ${iconButton('close', 'Cerrar', 14, 'close')}
    `;
  }
}

class RangeBar extends BaseElement {
  styles() {
    return `
      :host { display: flex; align-items: center; height: 26px; background: #0f0f0f; flex: none; padding: 0 2px 0 6px; }
      button { height: 22px; padding: 0 4px; font-size: 8px; }
      .sep { width: 1px; height: 14px; background: #3a3a3a; margin: 0 4px 0 3px; }
      .spacer { flex: 1; }
      .clock { font-size: 9px; }
    `;
  }
  markup() {
    return `
      ${['1D', '5D', '1M', '3M', '6M', 'YTD', '1A', '5A', 'Todos'].map(t => `<button>${t}</button>`).join('')}
      <span class="sep"></span>
      ${iconButton('gotodate', 'Ir a fecha', 14)}
      <span class="spacer"></span>
      <button class="clock">23:21:43 UTC-5</button>
    `;
  }
}

class PanelBar extends BaseElement {
  styles() {
    return `
      :host { display: flex; align-items: center; height: 25px; margin-top: 3px; background: #1e1e1e; flex: none; font-weight: 400; color: #e6e6e6; }
      .replay { display: flex; align-items: center; align-self: stretch; background: #0f0f0f; padding: 0 5px; gap: 5px; }
      .badge { position: relative; width: 16px; height: 16px; border-radius: 4px; background: #f5f5f5; color: #111; }
      .badge i { position: absolute; top: -2px; right: -1px; width: 4px; height: 4px; border-radius: 50%; background: #22ab7c; }
      .trade { height: 17px; padding: 0 7px; border: 1px solid #3f3f3f; border-radius: 4px; margin-left: 2px; }
      .panel { padding: 0 8px; }
      .spacer { flex: 1; }
      .sq { width: 24px; }
    `;
  }
  markup() {
    return `
      <div class="replay">
        <button class="badge" aria-label="Reproducción">${icon('rewindfill', 11)}<i></i></button>
        <span>Reproducir trading</span>
        <button class="trade">Operar</button>
      </div>
      <button class="panel">Panel de trading</button>
      <span class="spacer"></span>
      ${iconButton('up', 'Abrir panel', 12, 'sq')}
      ${iconButton('maximize', 'Maximizar panel', 13, 'sq')}
    `;
  }
}

class WatchList extends BaseElement {
  styles() {
    return `
      :host { display: flex; flex-direction: column; width: 134px; background: #0f0f0f; border-right: 1px solid #2c2c2c; flex: none; }
      .head { display: flex; align-items: center; height: 31px; padding-left: 9px; }
      .name { gap: 5px; margin-right: 2px; }
      .flag { color: #1ce8e0; }
      .sq { width: 25px; height: 24px; }
      .nar { width: 14px; height: 24px; }
      .sets { display: flex; gap: 4px; padding: 4px 9px 5px; }
      .sets button { width: 15px; height: 15px; border-radius: 50%; border: 1px solid #3a3a3a; font-size: 7px; color: #b5b5b5; }
      .sets .on { background: #fff; color: #1ce8e0; }
      .sets .blue { color: #2f6bf0; }
      table { width: 100%; border-collapse: separate; border-spacing: 0; }
      th { font-weight: 400; color: #8c8c8c; height: 19px; padding: 0 9px 0 10px; text-align: left; border-bottom: 1px solid #303030; }
      th:last-child, td:last-child { text-align: right; }
      td { height: 20px; padding: 0; }
      tbody::before { content: ""; display: block; height: 5px; }
      tr:last-child td { border-bottom: 1px solid #303030; }
      .sym { display: flex; align-items: center; gap: 3px; color: #e3e3e3; font-size: 8px; }
      td:last-child { color: #2cb685; font-weight: 400; padding-right: 10px; }
      tr.on td { border: 1px solid #bdbdbd; border-width: 1px 0; }
      tr.on td:first-child { border-left-width: 1px; border-radius: 4px 0 0 4px; }
      tr.on td:last-child { border-right-width: 1px; border-radius: 0 4px 4px 0; padding-right: 9px; }
      .spacer { flex: 1; }
      .foot { display: flex; align-items: center; height: 33px; padding-left: 10px; border-top: 2px solid #2e2e2e; }
      .foot .name { width: 42px; justify-content: flex-start; margin: 0; color: #eee; }
    `;
  }
  markup() {
    const rows = [['gold', 'XAUUSD', '0,25%'], ['eurusd', 'EURUSD', '0,12%'], ['audusd', 'AUDUSD', '0,23%']];
    return `
      <div class="head">
        <button class="name"><tv-icon class="flag" name="flag" size="10"></tv-icon>L...</button>
        ${iconButton('down', 'Listas', 9, 'nar')}
        ${iconButton('plus', 'Añadir símbolo', 15, 'sq')}
        ${iconButton('tablecols', 'Columnas', 15, 'sq')}
        ${iconButton('dots', 'Más', 14, 'sq')}
      </div>
      <div class="sets">
        <button class="on" aria-label="Lista cian">${icon('flag', 9)}</button>
        <button class="blue" aria-label="Lista azul">${icon('flag', 9)}</button>
        <button>N</button>
      </div>
      <table>
        <thead><tr><th>Símbolo</th><th>Cambio%</th></tr></thead>
        <tbody>
          ${rows.map(([ic, symbol, change], i) => `
            <tr class="${i === 1 ? 'on' : ''}">
              <td><span class="sym"><tv-icon class="flag" name="flag" size="9"></tv-icon>${icon(ic, 12)}<span>${symbol}</span></span></td>
              <td>${change}</td>
            </tr>
          `).join('')}
        </tbody>
      </table>
      <span class="spacer"></span>
      <div class="foot">
        <button class="name">${icon('eurusd', 15)}E..</button>
        ${iconButton('grid4', 'Widgets', 13, 'sq')}
        ${iconButton('edit', 'Nota', 14, 'sq')}
        ${iconButton('dots', 'Más', 14, 'sq')}
      </div>
    `;
  }
}

class SideRail extends BaseElement {
  styles() {
    return `
      :host { display: flex; flex-direction: column; align-items: center; width: 30px; background: #0f0f0f; flex: none; padding: 2px 0 1px; }
      button { position: relative; width: 25px; height: 26px; border-radius: 4px; margin: 0 0 5px; }
      .low { display: flex; flex-direction: column; align-items: center; }
      .low button { margin: 2px 0; }
      .on { background: #3a3a3a; }
      .spacer { flex: 1; }
      .low .apps { width: 22px; height: 22px; border-radius: 50%; background: #f8f8f8; color: #111; margin: 4px 0; }
      .low count-badge { right: -1px; }
      hr { width: 21px; height: 1px; border: 0; margin: 3px 0; background: #3a3a3a; }
    `;
  }
  markup() {
    return `
      ${iconButton('watchlist', 'Lista de seguimiento', 17, 'on')}
      <button aria-label="Alertas">${icon('alerts', 17)}<count-badge>33</count-badge></button>
      ${iconButton('layers', 'Ventana de datos', 17)}
      ${iconButton('chat', 'Chats', 17)}
      <span class="spacer"></span>
      <div class="low">
        ${iconButton('target', 'Screener', 19)}
        ${iconButton('pyramid', 'Pine', 18)}
        ${iconButton('calendar', 'Calendarios', 18)}
        <button aria-label="Transmisiones">${icon('stream', 16)}<count-badge>99+</count-badge></button>
        ${iconButton('bell', 'Notificaciones', 18)}
        ${iconButton('apps', 'Productos', 14, 'apps')}
        <hr>
        ${iconButton('help', 'Ayuda', 19)}
      </div>
    `;
  }
}

class TaskBar extends BaseElement {
  styles() {
    return `
      :host { display: grid; grid-template-columns: 1fr auto 1fr; align-items: center; height: 32px; background: #1c1c1c; border-top: 1px solid #333; flex: none; font-weight: 400; font-size: 8px; line-height: 10px; color: #fff; }
      .weather { justify-self: start; padding-left: 12px; gap: 4px; text-align: left; }
      .weather .pic { position: relative; display: flex; }
      .weather count-badge { background: #ef7685; color: #333; top: -3px; right: -2px; }
      .weather small { font-size: 8px; color: #ccc; display: block; }
      .apps { display: flex; align-items: center; }
      .apps > button { position: relative; width: 29px; height: 28px; }
      .apps > .on { background: #2b2b2b; border-radius: 4px; }
      .apps > .on::after { content: ""; position: absolute; bottom: 1px; left: 9px; right: 9px; height: 2px; border-radius: 1px; background: #e08086; }
      .apps count-badge { background: #e2685f; color: #222; top: 1px; right: 1px; }
      .apps .rec { position: absolute; top: 3px; right: 4px; width: 8px; height: 8px; border-radius: 50%; background: #d9101c; }
      .search { display: flex; align-items: center; gap: 5px; width: 145px; height: 22px; margin: 0 2px; padding: 0 5px 0 8px; border-radius: 11px; background: #383838; border: 1px solid #444; }
      .search input { flex: 1; min-width: 0; font-size: 9px; outline: 0; }
      .search input::placeholder { color: #d0d0d0; }
      .search tv-icon:last-child { margin-right: 5px; }
      .tray { justify-self: end; display: flex; align-items: center; padding-right: 12px; }
      .tray button { height: 26px; }
      .sq { width: 21px; }
      .nar { width: 18px; }
      .lang { width: 31px; text-align: center; }
      .clock { margin-left: 9px; text-align: right; }
    `;
  }
  markup() {
    return `
      <button class="weather">
        <span class="pic">${icon('weather', 18)}<count-badge>2</count-badge></span>
        <span>23°C<small>Mayorm. nublado</small></span>
      </button>
      <div class="apps">
        ${iconButton('windows', 'Inicio', 16)}
        <label class="search">${icon('search', 11)}<input placeholder="Buscar" aria-label="Buscar">${icon('globe', 17)}</label>
        ${iconButton('taskview', 'Vista de tareas', 17)}
        ${iconButton('copilot', 'Copilot', 16)}
        ${iconButton('folder', 'Explorador', 17)}
        ${iconButton('store', 'Store', 16)}
        ${iconButton('brave', 'Brave', 16)}
        <button class="on" aria-label="TradingView"><svg width="16" height="16" viewBox="-2 -2 22 22" style="background:#000;border-radius:3px;color:#fff">${ICONS.tv}</svg></button>
        ${iconButton('moneyapp', 'MetaTrader', 16)}
        <button aria-label="WhatsApp">${icon('whatsapp', 16)}<count-badge>6</count-badge></button>
        ${iconButton('notion', 'Notion', 14)}
        ${iconButton('telegram', 'Telegram', 16)}
        ${iconButton('chrome', 'Chrome', 16)}
        <button aria-label="OBS">${icon('obs', 15)}<span class="rec"></span></button>
      </div>
      <div class="tray">
        ${iconButton('up', 'Iconos ocultos', 8, 'sq')}
        ${iconButton('cloud', 'OneDrive', 12, 'sq')}
        ${iconButton('mic', 'Micrófono', 12, 'sq')}
        <button class="lang">ESP<br>LAA</button>
        ${iconButton('wifi', 'Red', 10, 'nar')}
        ${iconButton('speaker', 'Volumen', 11, 'nar')}
        ${iconButton('battery', 'Batería', 13, 'nar')}
        <button class="clock">23:21<br>19/01/2026</button>
      </div>
    `;
  }
}

class TradingApp extends BaseElement {
  styles() {
    return `
      :host { display: flex; flex-direction: column; height: 100vh; }
      main { display: flex; flex: 1; min-height: 0; padding-top: 2px; }
      .center { display: flex; flex-direction: column; flex: 1; min-width: 0; margin: 0 3px 0 2px; }
    `;
  }
  markup() {
    return `
      <tab-strip></tab-strip>
      <top-toolbar></top-toolbar>
      <main>
        <drawing-rail></drawing-rail>
        <div class="center">
          <chart-pane></chart-pane>
          <replay-bar></replay-bar>
          <range-bar></range-bar>
          <panel-bar></panel-bar>
        </div>
        <watch-list></watch-list>
        <side-rail></side-rail>
      </main>
      <task-bar></task-bar>
    `;
  }
}

customElements.define('tv-icon', TvIcon);
customElements.define('count-badge', CountBadge);
customElements.define('tab-strip', TabStrip);
customElements.define('top-toolbar', TopToolbar);
customElements.define('drawing-rail', DrawingRail);
customElements.define('price-plot', PricePlot);
customElements.define('price-scale', PriceScale);
customElements.define('time-scale', TimeScale);
customElements.define('chart-pane', ChartPane);
customElements.define('replay-bar', ReplayBar);
customElements.define('range-bar', RangeBar);
customElements.define('panel-bar', PanelBar);
customElements.define('watch-list', WatchList);
customElements.define('side-rail', SideRail);
customElements.define('task-bar', TaskBar);
customElements.define('trading-app', TradingApp);
</script>
</body>
</html>
